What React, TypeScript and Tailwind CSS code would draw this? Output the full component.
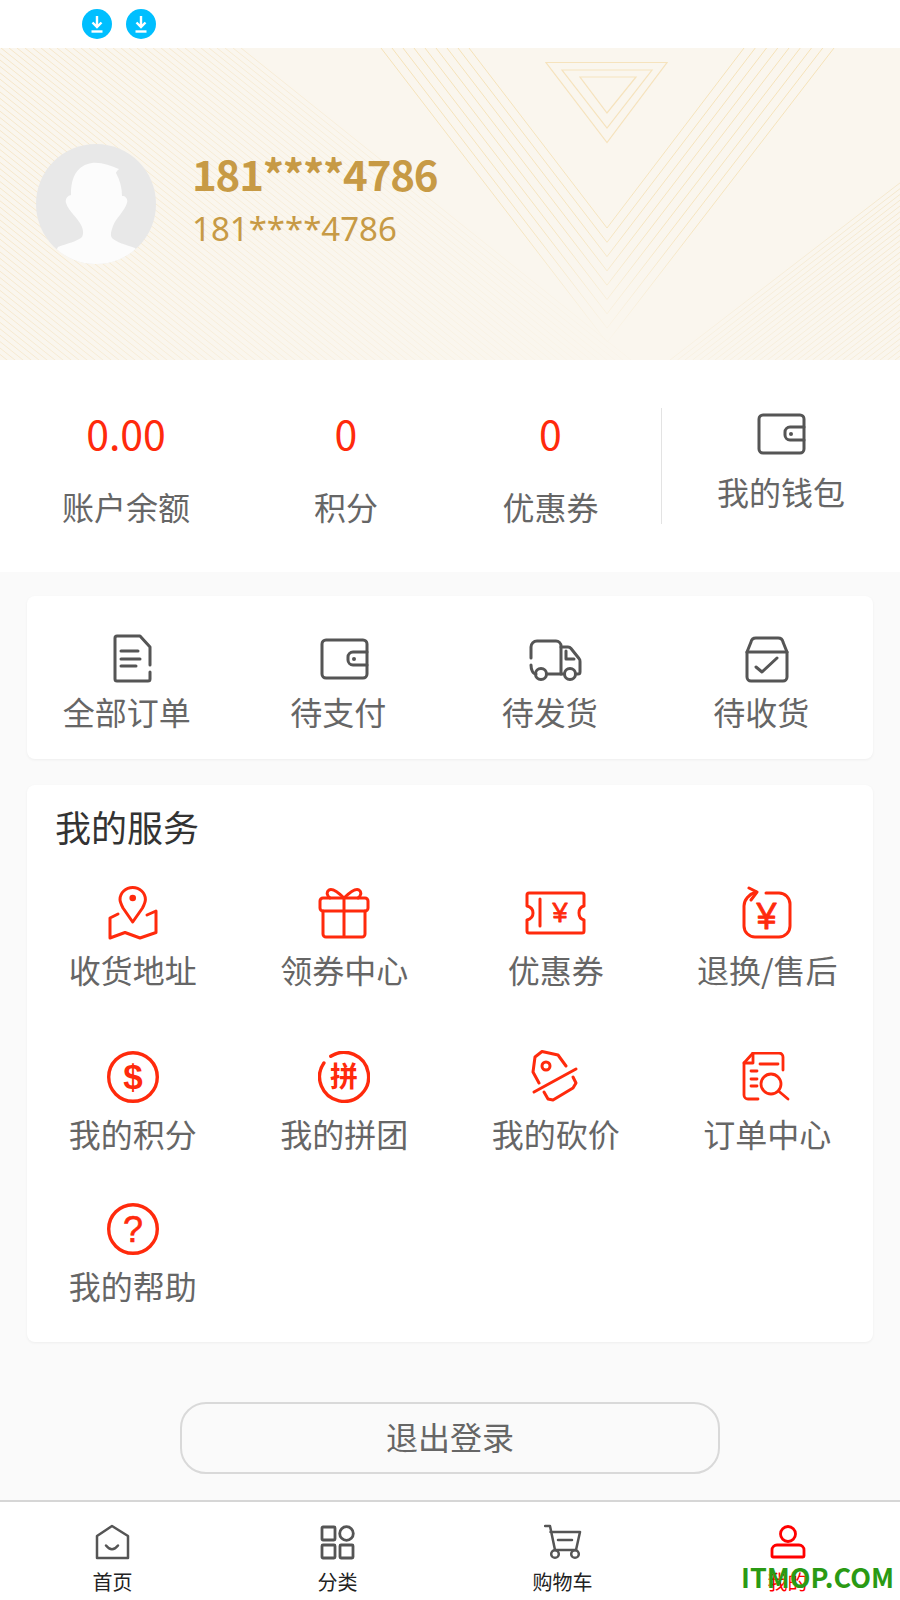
import React from 'react';

const RED = '#ff2a0c';
const GREY = '#555555';

function IconSvg({ w, h, color, sw = 3, children }: { w: number; h: number; color: string; sw?: number; children: React.ReactNode }) {
  return (
    <svg width={w} height={h} viewBox={`0 0 ${w} ${h}`} fill="none" stroke={color} strokeWidth={sw} strokeLinecap="round" strokeLinejoin="round">
      {children}
    </svg>
  );
}

function DownloadDot() {
  return (
    <svg width="30" height="30" viewBox="0 0 30 30">
      <circle cx="15" cy="15" r="15" fill="#00bfff" />
      <path d="M15 7v10M10.500 13.500l4.500 4.500 4.500-4.500" fill="none" stroke="#fff" strokeWidth="2.400" />
      <path d="M9.500 22.500h11" stroke="#fff" strokeWidth="2.400" />
    </svg>
  );
}

function BannerLines() {
  const chevrons = Array.from({ length: 9 }, (_, i) => i);
  const leftHatch = Array.from({ length: 110 }, (_, i) => 241 - i * 8);
  const rightHatch = Array.from({ length: 60 }, (_, i) => 670 + i * 7.500);
  return (
    <svg className="absolute inset-0" width="900" height="312" viewBox="0 0 900 312" fill="none">
      <defs>
        <linearGradient id="chev" gradientUnits="userSpaceOnUse" x1="0" y1="0" x2="0" y2="300">
          <stop offset="0" stopColor="#f5e2b8" />
          <stop offset="0.6" stopColor="#f5e2b8" stopOpacity="0.85" />
          <stop offset="1" stopColor="#f5e2b8" stopOpacity="0" />
        </linearGradient>
        <linearGradient id="leftH" gradientUnits="userSpaceOnUse" x1="0" y1="0" x2="600" y2="312">
          <stop offset="0" stopColor="#f5e6c8" />
          <stop offset="0.5" stopColor="#f5e6c8" stopOpacity="0.5" />
          <stop offset="1" stopColor="#f5e6c8" stopOpacity="0.12" />
        </linearGradient>
        <linearGradient id="rightH" gradientUnits="userSpaceOnUse" x1="900" y1="130" x2="700" y2="312">
          <stop offset="0" stopColor="#f3e4c4" />
          <stop offset="1" stopColor="#f3e4c4" stopOpacity="0.35" />
        </linearGradient>
      </defs>
      {leftHatch.map((x0) => (
        <line key={x0} x1={x0} y1="0" x2={x0 + 500} y2="400" stroke="url(#leftH)" strokeWidth="1" />
      ))}
      {rightHatch.map((x0) => (
        <line key={x0} x1={x0} y1="312" x2={x0 + 400} y2="4" stroke="url(#rightH)" strokeWidth="0.800" />
      ))}
      {chevrons.map((i) => (
        <path
          key={i}
          d={`M${469 - 11 * i} 0L607 ${180 + 14.3 * i}L${744 + 11.25 * i} 0`}
          stroke="url(#chev)"
          strokeWidth="1"
        />
      ))}
      <path d="M546 14.500H667L607 94.500Z" stroke="#f6e3bd" strokeWidth="1.200" />
      <path d="M562 22H652L607 80Z" stroke="#f6e3bd" strokeWidth="1.200" />
      <path d="M580 29H636L607 65Z" stroke="#f6e3bd" strokeWidth="1.200" />
    </svg>
  );
}

function Avatar() {
  return (
    <svg width="120" height="120" viewBox="0 0 120 120" className="shrink-0">
      <defs>
        <clipPath id="avatarClip">
          <circle cx="60" cy="60" r="60" />
        </clipPath>
      </defs>
      <circle cx="60" cy="60" r="60" fill="#e8e8e8" />
      <path
        clipPath="url(#avatarClip)"
        d="M35 50C35 32 42 21 56 19C65 18 75 22 83 25C81 27 80 28 80 29C84 36 86 44 86 52C90 52 92 55 91 59C88 68 80 74 77 82C75 88 74 91 76 94C80 98 90 101 99 104L108 122H12L22 103C30 100 42 97 46 93C48 89 47 85 45 81C42 74 33 68 30 59C29 55 31 52 35 51Z"
        fill="#fcfcfc"
      />
    </svg>
  );
}

function WalletIcon() {
  return (
    <IconSvg w={50} h={42} color={GREY}>
      <path d="M48 14V6a4 4 0 0 0-4-4H7a4 4 0 0 0-4 4v30a4 4 0 0 0 4 4h37a4 4 0 0 0 4-4V27" />
      <path d="M48 14H34a5 5 0 0 0-5 5v3a5 5 0 0 0 5 5h14z" />
      <circle cx="35" cy="21" r="2" fill={GREY} stroke="none" />
    </IconSvg>
  );
}

function DocIcon() {
  return (
    <IconSvg w={40} h={50} color={GREY}>
      <path d="M38 31V13L28 2H5a2 2 0 0 0-2 2v41a2 2 0 0 0 2 2h31a2 2 0 0 0 2-2v-7" />
      <path d="M9 17h17M9 25h19M9 32h15" />
    </IconSvg>
  );
}

function TruckIcon() {
  return (
    <IconSvg w={54} h={43} color={GREY}>
      <path d="M3 20V9a6 6 0 0 1 6-6h19a5 5 0 0 1 5 5v28" />
      <path d="M3 27c0 5 2 9 5 9" />
      <circle cx="13" cy="36" r="5.500" />
      <circle cx="42" cy="36" r="5.500" />
      <path d="M18.500 36h18" />
      <path d="M33 9h7a4 4 0 0 1 3 1.500l8 10a4 4 0 0 1 1 3V34a2 2 0 0 1-2 2h-2.500" />
      <path d="M38 13v8h8" />
    </IconSvg>
  );
}

function BoxCheckIcon() {
  return (
    <IconSvg w={46} h={47} color={GREY}>
      <path d="M3 16h40v25a4 4 0 0 1-4 4H7a4 4 0 0 1-4-4z" />
      <path d="M3 16L7 6a5 5 0 0 1 5-4h22a5 5 0 0 1 5 4l4 10" />
      <path d="M12 31l6 5 15-14" />
    </IconSvg>
  );
}

const ICON_TEXT = "'Liberation Sans', 'Noto Sans CJK SC', sans-serif";

function PinIcon() {
  return (
    <IconSvg w={50} h={54} color={RED}>
      <path d="M24.700 36L15 22C13 18 12 16 12 13.500A12.700 12 0 0 1 37.400 13.500C37.400 16 36.500 18 34.500 22Z" />
      <circle cx="24.700" cy="12" r="3.300" fill={RED} stroke="none" />
      <path d="M10 28L2 32V52L17 46.500L32 52L48 46.500V25L39 29" />
    </IconSvg>
  );
}

function GiftIcon() {
  return (
    <IconSvg w={52} h={52} color={RED}>
      <rect x="2" y="11" width="48" height="13" rx="3" />
      <path d="M5 24v23a3 3 0 0 0 3 3h36a3 3 0 0 0 3-3V24M26 11v39" />
      <path d="M26 11C20 5 14 1 11 3C8 5 9 9 12 11M26 11C32 5 38 1 41 3C44 5 43 9 40 11" />
    </IconSvg>
  );
}

function TicketIcon() {
  return (
    <IconSvg w={61} h={44} color={RED}>
      <path d="M4 2H57a2 2 0 0 1 2 2V15C55 16 54 19 54 22C54 25 55 28 59 29V40a2 2 0 0 1-2 2H4a2 2 0 0 1-2-2V29C6 28 8 25 8 22C8 19 6 16 2 15V4a2 2 0 0 1 2-2Z" />
      <path d="M15 8v27" />
      <text x="35" y="31" textAnchor="middle" fontSize="27" fill={RED} stroke={RED} strokeWidth="0.800" fontFamily={ICON_TEXT}>¥</text>
    </IconSvg>
  );
}

function RefundIcon() {
  return (
    <IconSvg w={52} h={54} color={RED}>
      <path d="M25 7H38a11 11 0 0 1 11 11v22a11 11 0 0 1-11 11H14a11 11 0 0 1-11-11V20C3 14 8 8 15 6" />
      <path d="M8 2L16 6L10 14" />
      <text x="25.500" y="43" textAnchor="middle" fontSize="36" fill={RED} stroke={RED} strokeWidth="0.800" fontFamily={ICON_TEXT}>¥</text>
    </IconSvg>
  );
}

function CoinIcon() {
  return (
    <IconSvg w={52} h={52} color={RED} sw={3.400}>
      <circle cx="26" cy="26" r="24.300" />
      <text x="26" y="38" textAnchor="middle" fontSize="35" fontWeight="700" fill={RED} stroke="none" fontFamily={ICON_TEXT}>$</text>
    </IconSvg>
  );
}

function GroupIcon() {
  return (
    <IconSvg w={52} h={52} color={RED} sw={3.400}>
      <path d="M12.800 5.300A24.500 24.500 0 1 1 5.900 12" />
      <text x="26" y="36" textAnchor="middle" fontSize="28" fontWeight="700" fill={RED} stroke="none" fontFamily="'Noto Sans CJK SC', sans-serif">拼</text>
    </IconSvg>
  );
}

function TagIcon() {
  return (
    <IconSvg w={50} h={54} color={RED}>
      <path d="M8 33L2 22L4 7L11 1.500L27 5L35 16" />
      <circle cx="15" cy="16" r="4" />
      <path d="M3 42L45 19" />
      <path d="M42 27L45 33L42 38L22 50L17 49L13 42" />
    </IconSvg>
  );
}

function OrderSearchIcon() {
  return (
    <IconSvg w={50} h={50} color={RED} sw={2.800}>
      <path d="M41 18V5a4 4 0 0 0-4-4H11L2 11V43a4 4 0 0 0 4 4H16" />
      <path d="M11 1V11H2" />
      <path d="M18 12H36M9 19H15M9 27H15M9 34H15" />
      <circle cx="29" cy="32" r="10" />
      <path d="M36.500 39L46 47" />
    </IconSvg>
  );
}

function HelpIcon() {
  return (
    <IconSvg w={52} h={52} color={RED} sw={3.400}>
      <circle cx="26" cy="26" r="24.300" />
      <text x="26" y="39" textAnchor="middle" fontSize="36" fill={RED} stroke={RED} strokeWidth="0.600" fontFamily={ICON_TEXT}>?</text>
    </IconSvg>
  );
}

function HomeTabIcon() {
  return (
    <IconSvg w={35} h={36} color={GREY} sw={2.500}>
      <path d="M2 12L17 2L33 12V34H2Z" />
      <path d="M11 21.500Q17 29 23 21.500" />
    </IconSvg>
  );
}

function GridTabIcon() {
  return (
    <IconSvg w={35} h={36} color={GREY} sw={2.800}>
      <rect x="2" y="3" width="13" height="13" rx="1" />
      <circle cx="26.500" cy="9.500" r="6.800" />
      <rect x="2" y="21" width="13" height="13" rx="1" />
      <rect x="20" y="21" width="13" height="13" rx="1" />
    </IconSvg>
  );
}

function CartTabIcon() {
  return (
    <IconSvg w={38} h={36} color={GREY} sw={2.500}>
      <path d="M1 2H6L11 26H32L36 8H6.500" />
      <path d="M14 16H28" />
      <circle cx="11" cy="30" r="3.800" />
      <circle cx="31" cy="30" r="3.800" />
    </IconSvg>
  );
}

function UserTabIcon() {
  return (
    <IconSvg w={36} h={36} color="#ff0000" sw={2.800}>
      <circle cx="18" cy="10" r="7.500" />
      <path d="M7 21H29a5 5 0 0 1 5 5V32a1 1 0 0 1-1 1H3a1 1 0 0 1-1-1V26a5 5 0 0 1 5-5Z" />
    </IconSvg>
  );
}

const orderItems = [
  { label: '全部订单', icon: <DocIcon /> },
  { label: '待支付', icon: <WalletIcon /> },
  { label: '待发货', icon: <TruckIcon /> },
  { label: '待收货', icon: <BoxCheckIcon /> },
];

const services = [
  { label: '收货地址', icon: <PinIcon /> },
  { label: '领券中心', icon: <GiftIcon /> },
  { label: '优惠券', icon: <TicketIcon /> },
  { label: '退换/售后', icon: <RefundIcon /> },
  { label: '我的积分', icon: <CoinIcon /> },
  { label: '我的拼团', icon: <GroupIcon /> },
  { label: '我的砍价', icon: <TagIcon /> },
  { label: '订单中心', icon: <OrderSearchIcon /> },
  { label: '我的帮助', icon: <HelpIcon /> },
];

const tabs = [
  { label: '首页', icon: <HomeTabIcon /> },
  { label: '分类', icon: <GridTabIcon /> },
  { label: '购物车', icon: <CartTabIcon /> },
  { label: '我的', icon: <UserTabIcon />, active: true },
];

export default function App() {
  return (
    <div className="relative flex h-[1600px] w-[900px] flex-col overflow-hidden bg-white font-['Noto_Sans_CJK_SC','Noto_Sans',sans-serif]">
      {/* Status bar */}
      <div className="flex h-12 items-center gap-[14px] pl-[82px]">
        <DownloadDot />
        <DownloadDot />
      </div>

      {/* Banner */}
      <div className="relative flex h-[312px] items-center bg-[#faf6ee] pl-[36px]">
        <BannerLines />
        <div className="relative flex items-center gap-[36px]">
          <Avatar />
          <div className="mt-[-9px] flex flex-col">
            <span className="text-[42px] leading-[56px] font-bold tracking-[-1.2px] text-[#c79a45]">181****4786</span>
            <span className="mt-[3px] font-['Noto_Sans','Open_Sans',sans-serif] text-[33px] leading-[50px] text-[#c79a45]">181****4786</span>
          </div>
        </div>
      </div>

      {/* Balance row */}
      <div className="flex h-[212px] pt-[44px]">
        <div className="flex w-[252px] flex-col items-center">
          <span className="text-[41px] leading-[56px] text-[#ff2a0c]">0.00</span>
          <span className="mt-[22px] text-[32px] leading-[48px] text-[#666]">账户余额</span>
        </div>
        <div className="flex w-[188px] flex-col items-center">
          <span className="text-[41px] leading-[56px] text-[#ff2a0c]">0</span>
          <span className="mt-[22px] text-[32px] leading-[48px] text-[#666]">积分</span>
        </div>
        <div className="flex w-[221px] flex-col items-center">
          <span className="text-[41px] leading-[56px] text-[#ff2a0c]">0</span>
          <span className="mt-[22px] text-[32px] leading-[48px] text-[#666]">优惠券</span>
        </div>
        <div className="mt-[4px] flex h-[116px] w-[239px] flex-col items-center border-l border-[#e3e3e3] pt-[5px]">
          <WalletIcon />
          <span className="mt-[12px] text-[32px] leading-[48px] text-[#666]">我的钱包</span>
        </div>
      </div>

      <div className="flex flex-1 flex-col bg-[#fafafa] px-[27px] pt-[24px]">
        {/* Orders */}
        <div className="h-[163px] rounded-lg bg-white pt-[38px] shadow-[0_1px_3px_rgba(0,0,0,0.05)]">
          <div className="-ml-[6px] grid w-[846px] grid-cols-4">
            {orderItems.map((item) => (
              <div key={item.label} className="flex flex-col items-center">
                <div className="flex h-[50px] items-center pl-[11px]">{item.icon}</div>
                <span className="mt-[7px] text-[32px] leading-[40px] text-[#666]">{item.label}</span>
              </div>
            ))}
          </div>
        </div>

        {/* Services */}
        <div className="mt-[26px] h-[557px] rounded-lg bg-white shadow-[0_1px_3px_rgba(0,0,0,0.05)]">
          <h2 className="pt-[17px] pl-[28px] text-[36px] leading-[48px] font-normal text-[#333]">我的服务</h2>
          <div className="mt-[36px] grid grid-cols-4 grid-rows-[164px_152px_auto]">
            {services.map((item) => (
              <div key={item.label} className="flex flex-col items-center">
                <div className="flex h-[54px] items-center">{item.icon}</div>
                <span className="mt-[9px] text-[32px] leading-[40px] text-[#666]">{item.label}</span>
              </div>
            ))}
          </div>
        </div>

        {/* Logout */}
        <button className="mx-auto mt-[60px] h-[72px] w-[540px] rounded-[26px] border-2 border-[#d9d9d9] pb-[4px] text-[32px] text-[#666]">
          退出登录
        </button>
      </div>

      {/* Tab bar */}
      <div className="grid h-[100px] grid-cols-4 border-t-2 border-[#d6d6d6] bg-white pt-[22px]">
        {tabs.map((tab) => (
          <div key={tab.label} className="flex flex-col items-center">
            <div className="flex h-[36px] items-center">{tab.icon}</div>
            <span className={`mt-[10px] text-[20px] leading-[24px] ${tab.active ? 'text-[#ff0000]' : 'text-[#222]'}`}>
              {tab.label}
            </span>
          </div>
        ))}
      </div>

      {/* Watermark */}
      <span className="absolute top-[1558px] left-[741px] text-[27px] leading-[38px] font-bold text-[#2a9a14]">
        ITMOP.COM
      </span>
    </div>
  );
}
